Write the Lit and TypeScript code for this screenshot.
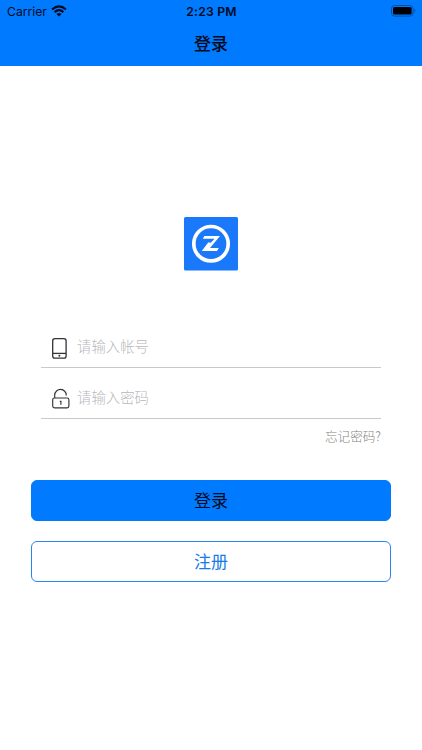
import { LitElement, html, css, svg } from "lit";
import { customElement } from "lit/decorators.js";

const wifi = svg`<svg class="wifi" viewBox="0 0 16 12">
  <g fill="none" stroke="#000a1c" stroke-width="2.2">
    <path d="M1.1 4.5 Q8 -1.7 14.9 4.5"/>
    <path d="M3.6 7.1 Q8 3.2 12.4 7.1"/>
  </g>
  <path fill="#000a1c" d="M5.5 8.9 Q8 6.9 10.5 8.9 L8 11.5Z"/>
</svg>`;

const battery = svg`<svg class="battery" viewBox="0 0 25 12">
  <rect x=".5" y=".5" width="21.6" height="10.6" rx="3" fill="none" stroke="#0050a8"/>
  <rect x="2" y="2" width="18.6" height="7.6" rx="1.5" fill="#000"/>
  <path d="M23.3 4 Q24.6 4.6 24.6 5.8 T23.3 7.6Z" fill="#0050a8"/>
</svg>`;

const logo = svg`<svg class="logo" viewBox="0 0 54 54">
  <rect width="54" height="53.6" rx="1.5" fill="#1a78fa"/>
  <circle cx="27" cy="26.7" r="17.2" fill="none" stroke="#fff" stroke-width="3.7"/>
  <path fill="#fff" d="M20.4 18.9H36L26 31H34.8L33 34H17.8L24.2 25.4H26.6L25.4 27.2L30.6 21.7H18.8Z"/>
</svg>`;

const phone = svg`<svg class="icon" viewBox="0 0 20 24" fill="none" stroke="#333" stroke-width="1.3">
  <rect x="2.7" y="2.6" width="13.4" height="19.5" rx="2.2"/>
  <path d="M2.7 17.4H16.1"/>
  <circle cx="9.4" cy="19.7" r="1" fill="#333" stroke="none"/>
</svg>`;

const lock = svg`<svg class="icon" viewBox="0 0 20 24" fill="none" stroke="#333" stroke-width="1.15">
  <rect x="2.7" y="11" width="16.2" height="9.9" rx="1.8"/>
  <path d="M4.7 11V8A5.7 5.7 0 0 1 16.3 8.4"/>
  <path d="M9.8 14.4H10.9V17.8"/>
</svg>`;

@customElement("app-root")
export class AppRoot extends LitElement {
  static styles = css`
    :host {
      display: block;
      height: 750px;
      background: #fff;
      overflow: hidden;
      font-family: Inter, "Noto Sans CJK SC", sans-serif;
    }
    svg { display: block; flex: none; }
    .top {
      height: 65.5px;
      background: #007aff;
      color: #000a1c;
    }
    .status {
      height: 22px;
      padding: 0 6px 0 7px;
      display: grid;
      grid-template-columns: 1fr auto 1fr;
      align-items: center;
      font-size: 12.2px;
    }
    .carrier { display: flex; align-items: center; gap: 4px; }
    .wifi { width: 16px; height: 12px; }
    .battery { width: 25px; height: 12px; justify-self: end; }
    .time { font-weight: 600; letter-spacing: 0.2px; }
    .title {
      margin: 0;
      height: 43px;
      text-align: center;
      font: 500 17px/41px "Noto Sans CJK SC", sans-serif;
      color: #000a1c;
    }
    .logo { width: 54px; height: 54px; margin: 151.5px auto 0; }
    .form { margin: 56px 41px 0; }
    .field {
      box-sizing: border-box;
      height: 51px;
      padding: 19px 0 0 9px;
      border-bottom: 1px solid #c9c9c9;
      display: flex;
      gap: 7px;
    }
    .field:first-child { height: 41px; padding-top: 9px; }
    .icon { width: 20px; height: 24px; }
    .hint {
      font: 300 14.4px/20px "Noto Sans CJK SC", sans-serif;
      color: #b8b8bc;
    }
    .forgot {
      font: 300 12.6px/18px "Noto Sans CJK SC", sans-serif;
      color: #868686;
      text-align: right;
      margin-top: 8px;
    }
    .actions {
      margin: 34.5px 31px 0;
      display: grid;
      gap: 20px;
    }
    button {
      height: 41px;
      padding: 0 0 2px;
      border: 1px solid #2a86ee;
      border-radius: 6px;
      background: #fff;
      color: #147be8;
      font: 400 17px/37px "Noto Sans CJK SC", sans-serif;
    }
    .primary { background: #007aff; border-color: #007aff; color: #000a1c; }
  `;

  render() {
    return html`
      <header class="top">
        <div class="status">
          <div class="carrier"><span>Carrier</span>${wifi}</div>
          <div class="time">2:23 PM</div>
          ${battery}
        </div>
        <h1 class="title">登录</h1>
      </header>
      ${logo}
      <div class="form">
        <div class="field">${phone}<span class="hint">请输入帐号</span></div>
        <div class="field">${lock}<span class="hint">请输入密码</span></div>
        <div class="forgot">忘记密码?</div>
      </div>
      <div class="actions">
        <button class="primary">登录</button>
        <button>注册</button>
      </div>
    `;
  }
}
